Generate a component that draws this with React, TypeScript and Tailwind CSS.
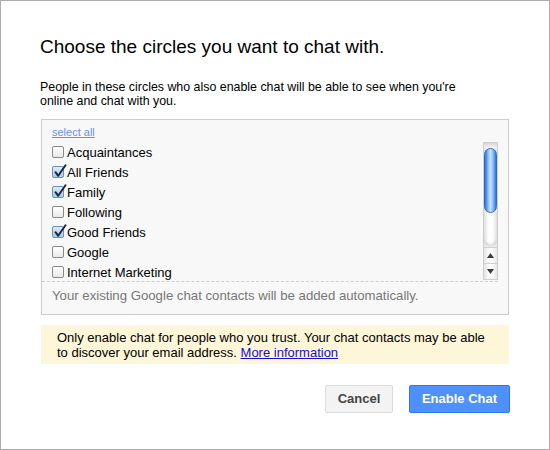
import React from "react";

const items: { label: string; checked: boolean }[] = [
  { label: "Acquaintances", checked: false },
  { label: "All Friends", checked: true },
  { label: "Family", checked: true },
  { label: "Following", checked: false },
  { label: "Good Friends", checked: true },
  { label: "Google", checked: false },
  { label: "Internet Marketing", checked: false },
];

function Check({ checked }: { checked: boolean }) {
  return (
    <span
      className={
        "relative mt-[4px] mr-[3px] block w-[12px] h-[12px] shrink-0 rounded-[2px] border " +
        (checked
          ? "border-[#6f8fb5] bg-[linear-gradient(to_bottom,#dcebfb,#a9cbef)]"
          : "border-[#8a8a8a] bg-[linear-gradient(to_bottom,#ffffff,#e9e9e9)]")
      }
    >
      {checked && (
        <svg
          className="absolute left-[1px] top-[-3px]"
          width="13"
          height="14"
          viewBox="0 0 13 14"
        >
          <path
            d="M1.5 8.2 L4.2 11.8 L11.5 1.2"
            fill="none"
            stroke="#1d2a3c"
            strokeWidth="2"
            strokeLinecap="round"
            strokeLinejoin="round"
          />
        </svg>
      )}
    </span>
  );
}

function Tri({ up }: { up: boolean }) {
  return (
    <svg width="7" height="5" viewBox="0 0 7 5">
      <path d={up ? "M0 5 L3.5 0 L7 5 Z" : "M0 0 L3.5 5 L7 0 Z"} fill="#3a3a3a" />
    </svg>
  );
}

function ScrollBar() {
  return (
    <div className="w-[15px] h-[138px] shrink-0 flex flex-col border border-[#cfcfcf] bg-[linear-gradient(to_right,#e2e2e2,#fbfbfb_35%,#ffffff_55%,#e6e6e6)]">
      <div className="h-[5px] shrink-0 bg-[linear-gradient(to_bottom,#d6d6d6,#f4f4f4)]" />
      <div className="h-[65px] shrink-0 rounded-full border border-[#2f68c9] bg-[linear-gradient(to_right,#2f73dc,#8dbff6_30%,#c6e2ff_50%,#8dbff6_72%,#2f73dc)]" />
      <div className="flex-1 rounded-b-full bg-[linear-gradient(to_right,#e8e8e8,#ffffff_40%,#ffffff_60%,#e8e8e8)] shadow-[inset_0_-3px_3px_rgba(0,0,0,0.12)]" />
      <div className="h-[16px] shrink-0 flex items-center justify-center border-t border-[#d0d0d0]">
        <Tri up />
      </div>
      <div className="h-[16px] shrink-0 flex items-center justify-center border-t border-[#d0d0d0]">
        <Tri up={false} />
      </div>
    </div>
  );
}

export default function App() {
  return (
    <div className="w-[550px] h-[450px] bg-white border border-[#adadad] font-['Arial','Liberation_Sans',sans-serif] text-[#222]">
      <div className="pl-[39px] pt-[34px] w-[509px]">
        <h1 className="text-[19px] leading-[24px] text-black font-normal whitespace-nowrap">
          Choose the circles you want to chat with.
        </h1>
        <p className="mt-[21px] text-[12.4px] leading-[14px] whitespace-nowrap text-black">
          People in these circles who also enable chat will be able to see when you're
          <br />
          online and chat with you.
        </p>

        <div className="mt-[11px] ml-[1px] w-[468px] border border-[#cccccc] bg-[#f8f8f8] pt-[5px] pr-[10px] pb-[11px]">
          <div className="pl-[10px] h-[14px] text-[11px] leading-[14px]">
            <a href="#" className="text-[#6f8fde] underline">
              select all
            </a>
          </div>
          <div className="mt-[3px] flex h-[139px]">
            <div className="flex-1 pl-[10px] overflow-hidden">
              {items.map((it) => (
                <div key={it.label} className="flex items-start h-[20px]">
                  <Check checked={it.checked} />
                  <span className="text-[13px] leading-[20px] pt-[1px] whitespace-nowrap text-black">
                    {it.label}
                  </span>
                </div>
              ))}
            </div>
            <ScrollBar />
          </div>
          <div className="border-t border-dashed border-[#cfcfcf] pl-[10px] pt-[6px] text-[13.2px] leading-[15px] text-[#777] whitespace-nowrap">
            Your existing Google chat contacts will be added automatically.
          </div>
        </div>

        <div className="mt-[10px] ml-[1px] w-[468px] bg-[#fdf6d8] pl-[16px] pt-[5px] pb-[4px] text-[13px] leading-[15px] whitespace-nowrap text-black">
          Only enable chat for people who you trust. Your chat contacts may be able
          <br />
          to discover your email address.{" "}
          <a href="#" className="text-[#1a0dcc] underline">
            More information
          </a>
        </div>

        <div className="mt-[21px] flex justify-end gap-[16px]">
          <button className="w-[68px] h-[28px] rounded-[2px] border border-[#dcdcdc] bg-[#f3f3f3] text-[13px] font-bold text-[#444]">
            Cancel
          </button>
          <button className="w-[101px] h-[28px] rounded-[2px] border border-[#3079ed] bg-[#4d90fe] text-[13px] font-bold text-white">
            Enable Chat
          </button>
        </div>
      </div>
    </div>
  );
}
